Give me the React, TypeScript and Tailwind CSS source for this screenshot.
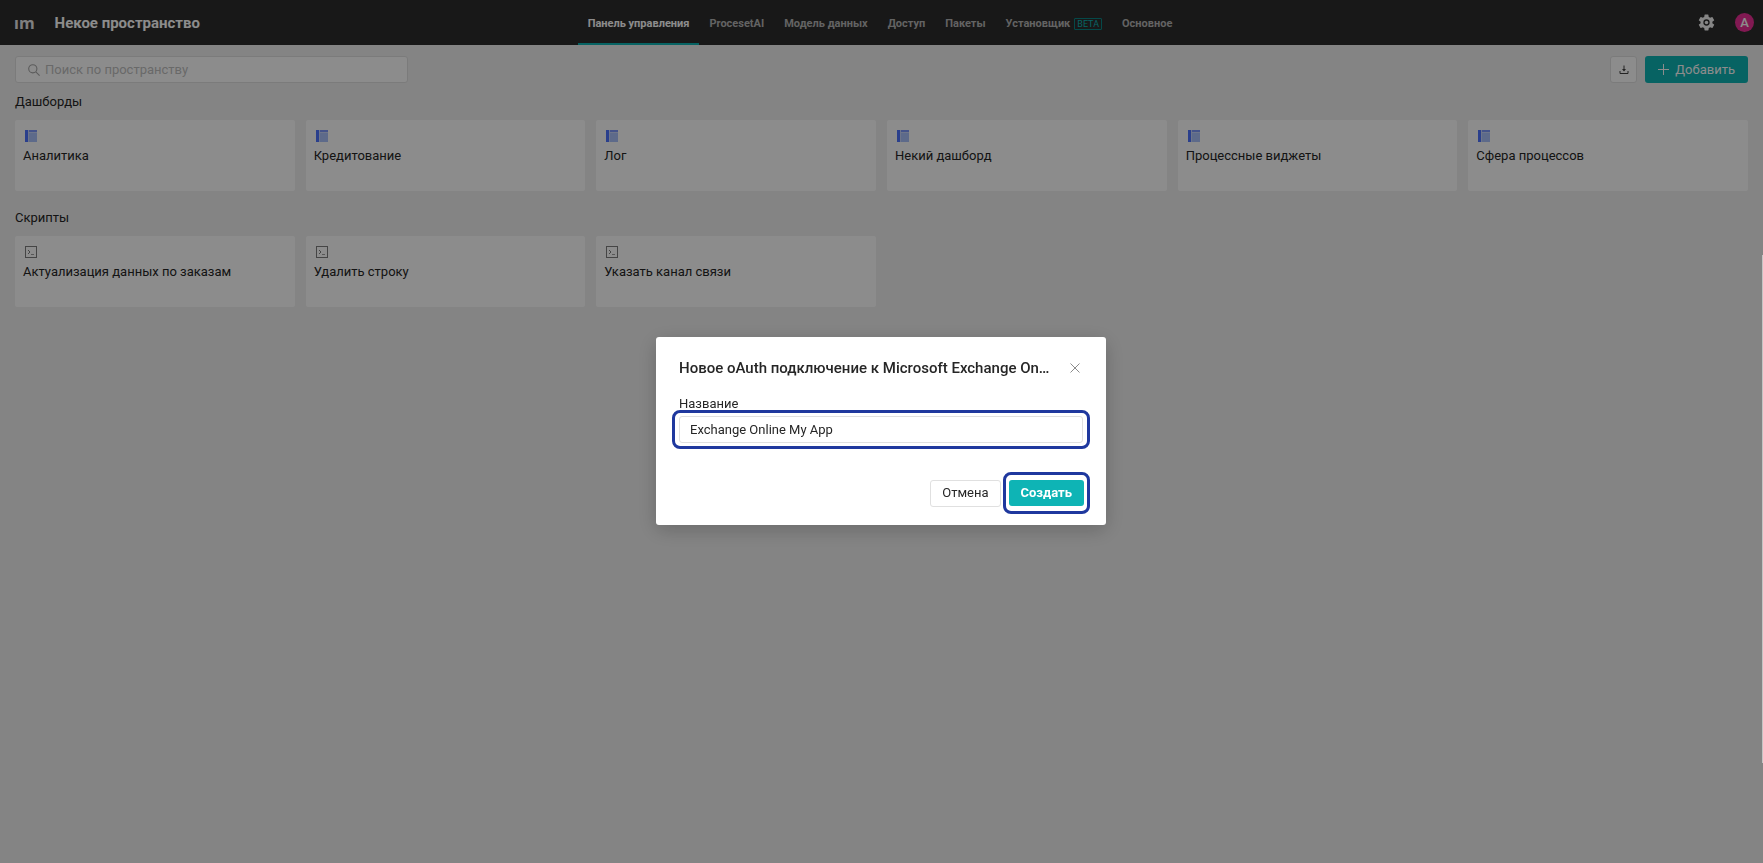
import React, { useState } from 'react';

const NAV_ITEMS = [
  { title: 'Панель управления', active: true },
  { title: 'ProcesetAI' },
  { title: 'Модель данных' },
  { title: 'Доступ' },
  { title: 'Пакеты' },
  { title: 'Установщик', beta: true },
  { title: 'Основное' },
];

const DASHBOARDS = ['Аналитика', 'Кредитование', 'Лог', 'Некий дашборд', 'Процессные виджеты', 'Сфера процессов'];
const SCRIPTS = ['Актуализация данных по заказам', 'Удалить строку', 'Указать канал связи'];

// --- ICONS ---
const DashboardIcon = () => (
  <svg width="12" height="12" viewBox="0 0 12 12" aria-hidden="true">
    <rect width="12" height="12" fill="#c8d6fb" />
    <rect width="3" height="12" fill="#4d73ff" />
    <rect x="4" width="8" height="2" fill="#7c98fb" />
    <rect x="4" y="3" width="8" height="9" fill="#a9c2fb" />
  </svg>
);

const ScriptIcon = () => (
  <svg width="12" height="12" viewBox="0 0 12 12" fill="none" aria-hidden="true">
    <rect x="0.5" y="0.5" width="11" height="11" stroke="#7f7f7f" />
    <path d="M3 4l2 2-2 2" stroke="#7f7f7f" />
    <path d="M6 8.5h3" stroke="#9f9f9f" />
  </svg>
);

const SearchIcon = () => (
  <svg width="12" height="12" viewBox="0 0 12 12" fill="none" stroke="#a6a6a6" strokeWidth="1.1" aria-hidden="true">
    <circle cx="4.8" cy="4.8" r="4.1" />
    <path d="M7.8 7.8l3.8 3.8" />
  </svg>
);

const DownloadIcon = () => (
  <svg width="10" height="10" viewBox="0 0 10 10" fill="none" stroke="#404040" aria-hidden="true">
    <path d="M5 0.5v5" />
    <path d="M3 4h4L5 6.5z" fill="#404040" stroke="none" />
    <path d="M1 6v2.5h8V6" />
  </svg>
);

const PlusIcon = () => (
  <svg width="11" height="11" viewBox="0 0 11 11" stroke="currentColor" aria-hidden="true">
    <path d="M5.5 0v11M0 5.5h11" />
  </svg>
);

const GearIcon = () => (
  <svg width="19" height="19" viewBox="0 0 24 24" fill="currentColor" aria-hidden="true">
    <path d="M19.4 13c.04-.33.06-.66.06-1s-.02-.67-.07-1l2.1-1.65a.5.5 0 0 0 .12-.64l-2-3.46a.5.5 0 0 0-.6-.22l-2.5 1a7.3 7.3 0 0 0-1.7-.98l-.37-2.65A.49.49 0 0 0 14 2h-4a.49.49 0 0 0-.5.42l-.37 2.65a7.3 7.3 0 0 0-1.69.98l-2.5-1a.5.5 0 0 0-.6.22l-2 3.46a.5.5 0 0 0 .12.64L4.57 11a7.9 7.9 0 0 0 0 2l-2.1 1.65a.5.5 0 0 0-.12.64l2 3.46c.12.22.38.3.6.22l2.5-1c.52.4 1.08.73 1.69.98l.37 2.65c.04.24.25.4.49.4h4c.25 0 .46-.16.5-.4l.37-2.65a7.3 7.3 0 0 0 1.69-.98l2.5 1c.22.08.48 0 .6-.22l2-3.46a.5.5 0 0 0-.12-.64zM12 16a4 4 0 1 1 0-8 4 4 0 0 1 0 8z" />
    <circle cx="12" cy="12" r="2.2" />
  </svg>
);

const CloseIcon = () => (
  <svg width="10" height="10" viewBox="0 0 10 10" stroke="currentColor" aria-hidden="true">
    <path d="M0.5 0.5l9 9M9.5 0.5l-9 9" />
  </svg>
);

// --- PAGE ---
const Navbar = () => (
  <header className="flex h-[45px] items-center justify-between bg-[#2d2d2d] pl-[14px] pr-[9px] text-white">
    <div className="flex flex-1 items-center gap-5">
      <span className="font-['Open_Sans',sans-serif] text-[16px] leading-5 font-bold text-[#e8e8e8]">ım</span>
      <h1 className="text-[15px] leading-5 font-bold">Некое пространство</h1>
    </div>
    <nav className="mr-2 flex h-full">
      {NAV_ITEMS.map((item) => (
        <a
          key={item.title}
          href="#"
          className={
            item.active
              ? 'flex items-center border-b-2 border-[#0eb4b5] px-[10px] pt-1 text-[11px] leading-5 font-bold text-white'
              : 'flex items-center gap-1 border-b-2 border-transparent px-[10px] pt-1 text-[11px] leading-5 font-bold text-[#b5b5b5]'
          }
        >
          {item.title}
          {item.beta && (
            <span className="rounded-[1px] border border-[#0a8586] px-[2px] text-[9px] leading-[10px] font-normal text-[#0eb4b5]">BETA</span>
          )}
        </a>
      ))}
    </nav>
    <div className="flex flex-1 items-center justify-end gap-[19px]">
      <button type="button" aria-label="Настройки" className="text-[#f2f2f2]">
        <GearIcon />
      </button>
      <button type="button" className="size-[19px] rounded-full bg-[#eb2f96] text-[13px] leading-[19px] font-medium text-white">А</button>
    </div>
  </header>
);

const Section = ({ title, items, icon }: { title: string; items: string[]; icon: React.ReactNode }) => (
  <section>
    <h2 className="text-[13px] leading-5">{title}</h2>
    <div className="mt-2 grid grid-cols-6 gap-[11px]">
      {items.map((item) => (
        <a key={item} href="#" className="flex h-[71px] flex-col gap-1 rounded-[2px] bg-white px-2 pt-[10px]">
          <span className="pl-[2px]">{icon}</span>
          <span className="text-[13px] leading-5">{item}</span>
        </a>
      ))}
    </div>
  </section>
);

const ConnectionDialog = () => {
  const [name, setName] = useState('Exchange Online My App');

  return (
    <div className="fixed inset-0 flex items-center justify-center bg-black/45 pr-px pb-px">
      <div
        role="dialog"
        aria-modal="true"
        aria-labelledby="dialog-title"
        className="w-[450px] rounded-[3px] bg-white px-[23px] pt-[21px] pb-[11px] text-[#262626] shadow-[0_5px_20px_rgba(0,0,0,0.2)]"
      >
        <div className="flex items-center justify-between gap-5">
          <h2 id="dialog-title" className="truncate text-[15px] leading-5 font-medium">
            Новое oAuth подключение к Microsoft Exchange Online
          </h2>
          <button type="button" aria-label="Закрыть" className="mr-[3px] shrink-0 text-[#8c8c8c]">
            <CloseIcon />
          </button>
        </div>
        <label htmlFor="connection-name" className="mt-4 block text-[13px] leading-5">Название</label>
        <div className="-mx-[7px] -mt-1 rounded-lg border-3 border-[#1f389e] px-1 py-[3px]">
          <input
            id="connection-name"
            type="text"
            value={name}
            onChange={(e) => setName(e.target.value)}
            className="block h-[27px] w-full rounded-[3px] border border-[#e0e0e0] px-[10px] text-[13px] outline-none"
          />
        </div>
        <div className="-mr-[7px] mt-[23px] flex items-center justify-end gap-[2px]">
          <button type="button" className="h-[27px] rounded-[3px] border border-[#e0e0e0] px-[11px] text-[13px]">Отмена</button>
          <div className="rounded-lg border-3 border-[#1f389e] px-[3px] py-[5px]">
            <button type="button" className="block h-[26px] rounded-[3px] bg-[#0eb4b5] px-3 text-[13px] font-bold text-white">Создать</button>
          </div>
        </div>
      </div>
    </div>
  );
};

const App: React.FC = () => (
  <div className="min-h-screen bg-[#f0f0f0] font-['Roboto',sans-serif] text-[#262626]">
    <Navbar />
    <main className="px-[15px] pt-[11px]">
      <div className="flex items-center justify-between">
        <label className="flex h-[27px] w-[393px] items-center gap-[5px] rounded-[3px] border border-[#e0e0e0] bg-white px-3">
          <SearchIcon />
          <input type="search" placeholder="Поиск по пространству" className="min-w-0 flex-1 text-[13px] outline-none placeholder:text-[#bfbfbf]" />
        </label>
        <div className="flex gap-2">
          <button type="button" aria-label="Скачать" className="flex size-[27px] items-center justify-center rounded-[3px] border border-[#e0e0e0] bg-white">
            <DownloadIcon />
          </button>
          <button type="button" className="flex h-[27px] items-center gap-[6px] rounded-[3px] bg-[#0eb4b5] px-[13px] text-[13px] text-white">
            <PlusIcon />
            Добавить
          </button>
        </div>
      </div>
      <div className="mt-[9px] flex flex-col gap-[17px]">
        <Section title="Дашборды" items={DASHBOARDS} icon={<DashboardIcon />} />
        <Section title="Скрипты" items={SCRIPTS} icon={<ScriptIcon />} />
      </div>
    </main>
    <ConnectionDialog />
    {/* Scrollbar thumb at the window edge */}
    <div className="fixed top-[255px] right-0 h-[508px] w-px bg-[#c4c4c4]" />
  </div>
);

export default App;
